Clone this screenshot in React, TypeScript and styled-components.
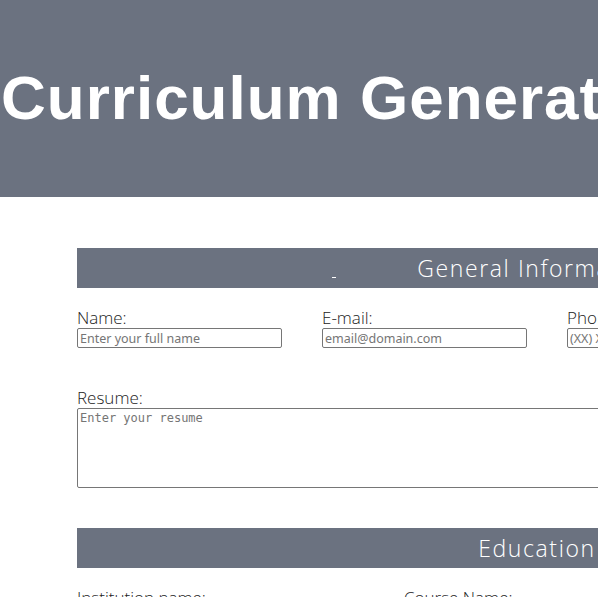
import React from 'react';
import styled, { createGlobalStyle } from 'styled-components';

const GlobalStyle = createGlobalStyle`
  html, body {
    margin: 0;
    padding: 0;
    overflow: hidden;
    background: #fff;
  }
  * {
    box-sizing: border-box;
  }
`;

const Page = styled.div`
  width: 1074px;
  min-height: 100vh;
  background: #fff;
`;

const Header = styled.header`
  height: 197px;
  display: flex;
  align-items: center;
  padding: 0 0 3px 1px;
  background-color: #6b7280;
  overflow: hidden;
`;

const Title = styled.h1`
  margin: 0;
  font-family: 'Liberation Sans', Arial, sans-serif;
  font-size: 62px;
  font-weight: 700;
  letter-spacing: 1px;
  color: #fff;
  white-space: nowrap;
`;

const Main = styled.main`
  width: 920px;
  margin: 51px 0 0 77px;
  display: flex;
  flex-direction: column;
  gap: 40px;
`;

const Section = styled.section`
  display: flex;
  flex-direction: column;
`;

const SectionBar = styled.div`
  position: relative;
  height: 40px;
  display: flex;
  align-items: center;
  justify-content: center;
  background-color: #6b7280;
`;

const SectionTitle = styled.h2`
  margin: 0;
  font-family: 'Open Sans', sans-serif;
  font-size: 23px;
  font-weight: 300;
  letter-spacing: 1.6px;
  color: #fff;
`;

const Dash = styled.span`
  position: absolute;
  left: 255px;
  top: 29px;
  width: 4px;
  height: 1px;
  background: #fff;
`;

const Row = styled.div<{ $gap: number; $top?: number }>`
  display: flex;
  gap: ${(p) => p.$gap}px;
  margin-top: ${(p) => p.$top ?? 20}px;
`;

const Field = styled.div<{ $width?: number }>`
  display: flex;
  flex-direction: column;
  width: ${(p) => (p.$width ? `${p.$width}px` : '100%')};
`;

const Label = styled.label`
  display: block;
  height: 20px;
  line-height: 20px;
  font-family: 'Open Sans', sans-serif;
  font-size: 17px;
  font-weight: 300;
  color: #222;
  white-space: nowrap;
`;

const Input = styled.input`
  width: 205px;
  height: 20px;
  padding: 1px 2px;
  border: 1px solid #767676;
  border-radius: 2px;
  font-family: 'Noto Sans', sans-serif;
  font-size: 12.5px;
  color: #222;
  outline: none;

  &::placeholder {
    color: #757575;
  }
`;

const TextArea = styled.textarea`
  width: 100%;
  height: 80px;
  padding: 2px;
  border: 1px solid #767676;
  border-radius: 2px;
  font-family: 'DejaVu Sans Mono', monospace;
  font-size: 12px;
  resize: none;
  outline: none;

  &::placeholder {
    color: #757575;
  }
`;

function App(): JSX.Element {
  return (
    <Page>
      <GlobalStyle />
      <Header>
        <Title>Curriculum Generator</Title>
      </Header>
      <Main>
        <Section>
          <SectionBar>
            <Dash />
            <SectionTitle>General Information</SectionTitle>
          </SectionBar>
          <Row $gap={40}>
            <Field $width={205}>
              <Label>Name:</Label>
              <Input placeholder="Enter your full name" />
            </Field>
            <Field $width={205}>
              <Label>E-mail:</Label>
              <Input placeholder="email@domain.com" />
            </Field>
            <Field $width={205}>
              <Label>Phone:</Label>
              <Input placeholder="(XX) XXXXX-XXXX" />
            </Field>
          </Row>
          <Row $gap={40} $top={40}>
            <Field>
              <Label>Resume:</Label>
              <TextArea placeholder="Enter your resume" />
            </Field>
          </Row>
        </Section>
        <Section>
          <SectionBar>
            <SectionTitle>Education</SectionTitle>
          </SectionBar>
          <Row $gap={61}>
            <Field $width={266}>
              <Label>Institution name:</Label>
              <Input placeholder="Enter the institution" />
            </Field>
            <Field $width={266}>
              <Label>Course Name:</Label>
              <Input placeholder="Enter the course" />
            </Field>
            <Field $width={266}>
              <Label>Conclusion:</Label>
              <Input placeholder="MM/YYYY" />
            </Field>
          </Row>
        </Section>
      </Main>
    </Page>
  );
}

export default App;
